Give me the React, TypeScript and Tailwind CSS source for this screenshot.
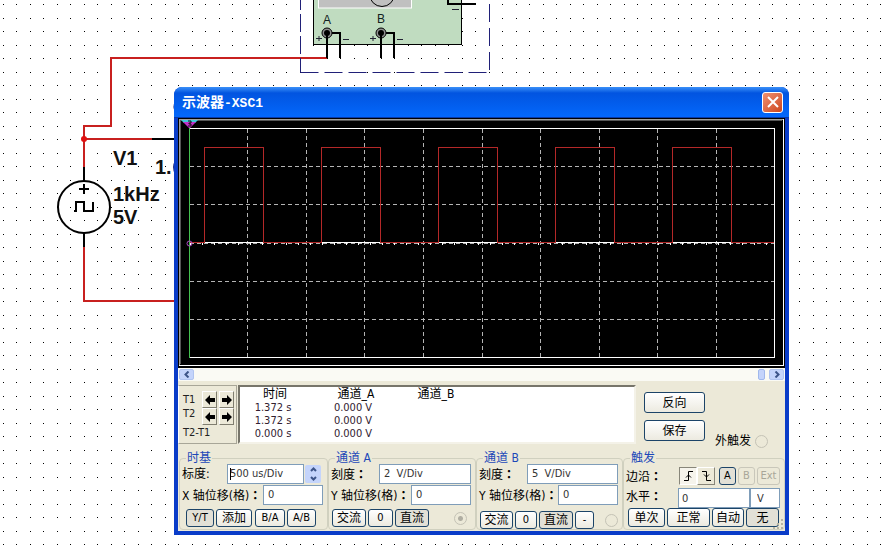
import { ReactNode } from 'react'
import clsx from 'clsx'

const PULSES = [26, 143, 260, 377, 494]
const V_LINES = [69, 128, 186, 245, 304, 362, 421, 479, 538]
const H_LINES = [48, 86, 163, 201]

const READINGS = [
  { time: '1.372 s', a: '0.000 V' },
  { time: '1.372 s', a: '0.000 V' },
  { time: '0.000 s', a: '0.000 V' },
]

function Schematic() {
  return (
    <svg className="absolute inset-0 h-full w-full" fill="none">
      <defs>
        <pattern id="dots" width="27" height="27" patternUnits="userSpaceOnUse">
          <path d="M3 4h1v1h-1zM16 4h1v1h-1zM3 18h1v1h-1zM16 18h1v1h-1z" fill="#000" />
        </pattern>
      </defs>
      <rect width="100%" height="100%" fill="url(#dots)" />

      {/* wires */}
      <g stroke="#c8201f" strokeWidth="2">
        <path d="M327 58H111V126H84V167" />
        <path d="M84 139H152" />
        <path d="M84 247V301H180" />
      </g>
      <circle cx="84" cy="139" r="3" fill="#e01010" />

      {/* pulse source V1 */}
      <g stroke="#000" strokeWidth="2">
        <path d="M152 139H180M84 167V181M84 233V247" />
        <circle cx="84" cy="207" r="26" />
        <path d="M79 189H89M84 184V194" />
        <path d="M74 211H76V202H84V211H93V202" />
      </g>
      <path d="M176 102q-3 4 0 10M176 161q-4 6 0 13" stroke="#1c2a80" strokeWidth="2" />
      <g fill="#111" fontFamily="'Liberation Sans', Arial, sans-serif" fontWeight="700" fontSize="20">
        <text x="113" y="165">V1</text>
        <text x="155" y="174">1.</text>
        <text x="113" y="201">1kHz</text>
        <text x="113" y="224">5V</text>
      </g>

      {/* oscilloscope symbol */}
      <rect x="313.5" y="-10" width="148" height="54.5" fill="#c0dcc0" stroke="#000" />
      <rect x="318.5" y="-10" width="93" height="18" fill="#c0c0c0" stroke="#fff" />
      <circle cx="382" cy="-6" r="12.5" stroke="#000" />
      <path d="M448 0V4H476" stroke="#000" strokeWidth="2" />
      <path d="M452 9.5h7M343 39.5h6M397 39.5h6M316 38.5h6M319 36v5M370 38.5h6M373 36v5" stroke="#223" />
      {[327, 381].map(x => (
        <g key={x}>
          <circle cx={x} cy="33" r="5" fill="#909090" stroke="#000" />
          <circle cx={x} cy="33" r="3" fill="#000" />
          <path d={`M${x} 33V58M${x + 5} 33H${x + 13}V58`} stroke="#000" strokeWidth="2" />
        </g>
      ))}
      <g fill="#122" fontFamily="'Liberation Sans', Arial, sans-serif" fontSize="12" textAnchor="middle">
        <text x="327" y="24">A</text>
        <text x="381" y="23">B</text>
      </g>
      <path d="M300.5 -8V72.5" stroke="#202078" strokeDasharray="18 4" />
      <path d="M300.5 72.5H489.5" stroke="#202078" strokeDasharray="18 6" />
      <path d="M489.5 4V72.5" stroke="#202078" strokeDasharray="18 6" />
    </svg>
  )
}

function ScopeScreen() {
  return (
    <svg viewBox="0 0 607 250" className="block h-auto w-full" fill="none" shapeRendering="crispEdges">
      <rect width="607" height="250" fill="#000" />
      <path d="M1.5 247V1.5H605" stroke="#a0a0a0" />
      <path d="M2.5 246V2.5H604" stroke="#555" />
      <path d="M1 247.5H605.5V1" stroke="#fff" />
      <path d="M11 10.5H596.5V239.5H11" stroke="#fff" />

      <g stroke="#b4b4b4" strokeDasharray="4 3">
        {V_LINES.map(x => <path key={x} d={`M${x + 0.5} 11V239`} />)}
        {H_LINES.map(y => <path key={y} d={`M12 ${y + 0.5}H596`} />)}
        <path d="M12 125.5H596" />
      </g>
      {/* minor ticks on the zero line */}
      <path d="M12 126H596" stroke="#fff" strokeWidth="2" strokeDasharray="1 11" />

      <path
        d={`M11 124.5${PULSES.map(x => `H${x + 0.5}V29.5h59V124.5`).join('')}H596`}
        stroke="#b42828"
      />
      {PULSES.map(x => (
        <path key={x} d={`M${x + 1} 124.5h58`} stroke="#fff" />
      ))}

      {/* cursor */}
      <path d="M11.5 8V240" stroke="#44c050" />
      <g shapeRendering="auto">
        <path d="M3 2h17l-3 3H6z" fill="#40c8d8" />
        <path d="M5 4h13l-6 6h-1z" fill="#c030c8" />
        <path d="M10 3h3v2h-2v1h2v2h-3" stroke="#111" />
        <circle cx="11.5" cy="125.5" r="2.5" stroke="#b04cc8" />
      </g>
    </svg>
  )
}

function ArrowButton({ left, label }: { left?: boolean; label: string }) {
  return (
    <button
      aria-label={label}
      className="flex h-[17px] w-[15px] items-center justify-center border border-t-white border-r-[#807e70] border-b-[#807e70] border-l-white bg-[#ece9d8]"
    >
      <svg width="10" height="10" viewBox="0 0 10 10" className={left ? '' : 'rotate-180'}>
        <path d="M0 5L5 0V3H10V7H5V10Z" fill="#000" />
      </svg>
    </button>
  )
}

function PushButton({ children, className, pressed }: { children: ReactNode; className?: string; pressed?: boolean }) {
  return (
    <button
      className={clsx(
        'flex shrink-0 items-center justify-center rounded-[3px] border border-[#1c4468] whitespace-nowrap',
        pressed ? 'bg-[#e2e0d6]' : 'bg-linear-to-b from-white to-[#eceae0]',
        className,
      )}
    >
      {children}
    </button>
  )
}

function Group({ title, children }: { title: string; children: ReactNode }) {
  return (
    <fieldset className="min-w-0 rounded-sm border border-[#d0d0bf] pr-1 pl-0.5">
      <legend className="ml-1 h-3 px-px leading-3 text-[#1c48b8]">{title}</legend>
      {children}
    </fieldset>
  )
}

// full-width colon, centred in its cell
function Colon() {
  return <span className="font-['Noto_Sans_CJK_TC',sans-serif] font-bold">：</span>
}

function Field({ id, label, value, className }: { id: string; label: string; value: string; className: string }) {
  return (
    <div className="mb-px flex h-5 items-center justify-between">
      <label htmlFor={id} className="whitespace-nowrap">{label}<Colon /></label>
      <input
        id={id}
        defaultValue={value}
        className={clsx('h-5 shrink-0 border border-[#7f9db9] bg-white px-1 pb-0.5 text-[11px] text-[#333]', className)}
      />
    </div>
  )
}

function Lamp({ label, on, className }: { label: string; on?: boolean; className?: string }) {
  return (
    <input
      type="radio"
      disabled
      aria-label={label}
      className={clsx(
        'h-[13px] w-[13px] shrink-0 appearance-none rounded-full border border-[#c4c2b5]',
        on && 'bg-[radial-gradient(circle,#b0aea2_2px,transparent_3px)]',
        className,
      )}
    />
  )
}

function ScrollButton({ label, d }: { label: string; d: string }) {
  return (
    <button aria-label={label} className="flex h-[11px] w-[15px] items-center justify-center rounded-xs border border-[#b0c4f0] bg-[#c4d4fb]">
      <svg width="6" height="7" viewBox="0 0 6 7" fill="none"><path d={d} stroke="#3c5488" strokeWidth="2" /></svg>
    </button>
  )
}

export default function App() {
  return (
    <div className="relative min-h-screen bg-white pt-[87px] pr-[98px] pl-[174px]">
      <Schematic />

      <section className="relative rounded-t-lg bg-[#0a3cc8] px-1 pb-1 font-['DejaVu_Sans_Condensed','Noto_Sans_CJK_SC',sans-serif] text-[12px] leading-4 text-black">
        <header className="-mx-1 flex h-[31px] items-center justify-between rounded-t-lg border-b border-[#0838a8] bg-linear-to-b from-[#3a90f8] via-[#0254e0] via-20% to-[#0468fc] pr-1.5 pl-2">
          <h1 className="pt-0.5 font-['Liberation_Mono','Noto_Sans_CJK_SC',monospace] text-[14px] font-bold text-white">
            示波器<span className="text-[13px]">-XSC1</span>
          </h1>
          <button aria-label="关闭" className="flex h-[21px] w-[21px] items-center justify-center rounded-[3px] border border-white bg-linear-to-br from-[#f09070] to-[#cc4418]">
            <svg width="12" height="12" viewBox="0 0 12 12" stroke="#fff" strokeWidth="2"><path d="M1 1L11 11M11 1L1 11" /></svg>
          </button>
        </header>

        <div className="relative bg-[#ece9d8]">
          <ScopeScreen />
          <div className="flex h-[13px] items-center justify-between bg-[#fafaf4] px-px">
            <ScrollButton label="向左" d="M4.5 0.5L1.5 3.5L4.5 6.5" />
            <div className="flex gap-1">
              <div className="h-[11px] w-[7px] rounded-xs border border-[#a0b8ec] bg-[#c4d4fb]" />
              <ScrollButton label="向右" d="M1.5 0.5L4.5 3.5L1.5 6.5" />
            </div>
          </div>

          <div className="flex items-start pt-1">
            <div className="flex h-[59px] w-[59px] flex-col border border-[#a8a698] border-l-white pt-[5px] pr-0.5 pl-1 text-[11px] text-[#222]">
              <div className="flex justify-between">
                <div className="pt-0.5 leading-[14px]">
                  <p>T1</p>
                  <p>T2</p>
                </div>
                <div className="grid grid-cols-2 gap-x-0.5">
                  <ArrowButton left label="T1 左移" />
                  <ArrowButton label="T1 右移" />
                  <ArrowButton left label="T2 左移" />
                  <ArrowButton label="T2 右移" />
                </div>
              </div>
              <p className="whitespace-nowrap">T2-T1</p>
            </div>

            <div className="ml-px h-[59px] flex-1 border-2 border-t-[#77756a] border-r-[#f4f2e8] border-b-[#f4f2e8] border-l-[#77756a] bg-white">
              <table className="mt-px leading-[13px]">
                <thead>
                  <tr>
                    <th className="w-[70px] p-0 font-normal">时间</th>
                    <th className="w-[92px] p-0 font-normal">通道_A</th>
                    <th className="w-[68px] p-0 font-normal">通道_B</th>
                  </tr>
                </thead>
                <tbody className="text-[11px] text-[#312030]">
                  {READINGS.map((r, i) => (
                    <tr key={i}>
                      <td className="p-0 pr-1 text-center">{r.time}</td>
                      <td className="p-0 pr-1.5 text-center">{r.a}</td>
                      <td className="p-0" />
                    </tr>
                  ))}
                </tbody>
              </table>
            </div>

            <div className="flex w-[149px] items-end pt-[7px] pl-2">
              <div className="flex flex-col gap-[7px]">
                <PushButton className="h-[21px] w-[61px]">反向</PushButton>
                <PushButton className="h-[21px] w-[61px]">保存</PushButton>
              </div>
              <label className="-mb-2 ml-2.5 flex items-center gap-1 whitespace-nowrap">
                外触发
                <Lamp label="外触发" />
              </label>
            </div>
          </div>

          <div className="grid h-[87px] grid-cols-[149fr_148fr_147fr_162fr] pt-2 pb-px pl-px">
            <Group title="时基">
              <div className="mb-px flex h-5 items-center">
                <label htmlFor="timebase">标度:</label>
                <div className="relative ml-auto">
                  <input id="timebase" defaultValue="500 us/Div" className="block h-5 w-[77px] border border-[#7f9db9] bg-white px-0.5 pb-0.5 text-[11px] text-[#333]" />
                  <span className="absolute top-1 left-[3px] h-3 w-px bg-black" />
                </div>
                <div className="mr-0.5 ml-px flex h-[18px] w-4 flex-col rounded-xs bg-[#c4d4fb]">
                  <button aria-label="增大" className="flex h-[9px] items-center justify-center">
                    <svg width="7" height="5" viewBox="0 0 7 5" fill="none"><path d="M1 4L3.5 1.5L6 4" stroke="#3c5488" strokeWidth="2" /></svg>
                  </button>
                  <button aria-label="减小" className="flex h-[9px] items-center justify-center">
                    <svg width="7" height="5" viewBox="0 0 7 5" fill="none"><path d="M1 1L3.5 3.5L6 1" stroke="#3c5488" strokeWidth="2" /></svg>
                  </button>
                </div>
              </div>
              <Field id="x-pos" label="X 轴位移(格)" value="0" className="w-[60px]" />
              <div className="flex gap-0.5 pt-[3px] pl-1">
                <PushButton pressed className="h-[18px] w-7 text-[11px]">Y/T</PushButton>
                <PushButton className="h-[18px] w-9">添加</PushButton>
                <PushButton className="ml-px h-[18px] w-[30px] text-[11px]">B/A</PushButton>
                <PushButton className="h-[18px] w-[29px] text-[11px]">A/B</PushButton>
              </div>
            </Group>

            <Group title="通道 A">
              <Field id="a-scale" label="刻度" value="2  V/Div" className="w-[92px]" />
              <Field id="a-pos" label="Y 轴位移(格)" value="0" className="w-[60px]" />
              <div className="flex items-center gap-0.5 pt-[3px] pl-px">
                <PushButton className="h-[18px] w-[34px]">交流</PushButton>
                <PushButton className="h-[18px] w-[25px] text-[11px]">0</PushButton>
                <PushButton pressed className="h-[18px] w-[34px]">直流</PushButton>
                <Lamp label="通道 A 触发" on className="mr-1 ml-auto" />
              </div>
            </Group>

            <Group title="通道 B">
              <Field id="b-scale" label="刻度" value="5  V/Div" className="w-[91px]" />
              <Field id="b-pos" label="Y 轴位移(格)" value="0" className="w-[60px]" />
              <div className="flex items-center gap-0.5 pt-[5px] pl-px">
                <PushButton className="h-[18px] w-[33px]">交流</PushButton>
                <PushButton className="h-[18px] w-[22px] text-[11px]">0</PushButton>
                <PushButton pressed className="h-[18px] w-[34px]">直流</PushButton>
                <PushButton className="h-[18px] w-[19px] text-[11px]">-</PushButton>
                <Lamp label="通道 B 触发" className="ml-auto" />
              </div>
            </Group>

            <Group title="触发">
              <div className="flex h-6 items-center">
                <span>边沿<Colon /></span>
                <button aria-label="上升沿" className="ml-auto flex h-[18px] w-[18px] items-center justify-center border border-t-[#88867a] border-r-white border-b-white border-l-[#88867a] bg-[#f6f4ec]">
                  <svg width="11" height="11" viewBox="0 0 11 11" fill="none" stroke="#000"><path d="M1 9.5H5.5V0.5H10M3 6.5L5.5 4L8 6.5" /></svg>
                </button>
                <button aria-label="下降沿" className="flex h-[18px] w-[18px] items-center justify-center border border-t-white border-r-[#88867a] border-b-[#88867a] border-l-white">
                  <svg width="11" height="11" viewBox="0 0 11 11" fill="none" stroke="#000"><path d="M1 0.5H5.5V9.5H10M3 3.5L5.5 6L8 3.5" /></svg>
                </button>
                <PushButton pressed className="ml-1 h-[18px] w-[17px] text-[11px]">A</PushButton>
                <button disabled className="ml-0.5 h-[18px] w-[17px] rounded-[3px] border border-[#c9c7ba] text-[11px] text-[#a8a698]">B</button>
                <button disabled className="ml-0.5 h-[18px] w-[23px] rounded-[3px] border border-[#c9c7ba] text-[11px] text-[#a8a698]">Ext</button>
              </div>
              <div className="flex h-5 items-center">
                <label htmlFor="level" className="mb-1">水平<Colon /></label>
                <input id="level" defaultValue="0" className="ml-auto h-5 w-[72px] border border-[#7f9db9] bg-white px-[3px] text-[11px] text-[#333]" />
                <input aria-label="单位" defaultValue="V" className="h-5 w-[30px] border border-[#7f9db9] bg-white px-1.5 text-[11px] text-[#333]" />
              </div>
              <div className="flex gap-0.5 pl-0.5">
                <PushButton className="h-[19px] w-[37px]">单次</PushButton>
                <PushButton className="h-[19px] w-[43px]">正常</PushButton>
                <PushButton className="h-[19px] w-8">自动</PushButton>
                <PushButton pressed className="h-[19px] w-[33px]">无</PushButton>
              </div>
            </Group>
          </div>

          {/* resize grip */}
          <svg width="11" height="11" viewBox="0 0 11 11" className="absolute right-px bottom-px">
            <path d="M8 0h2v2h-2zM8 4h2v2h-2zM4 4h2v2h-2zM8 8h2v2h-2zM4 8h2v2h-2zM0 8h2v2h-2z" fill="#b8b4a2" />
          </svg>
        </div>
      </section>
    </div>
  )
}
